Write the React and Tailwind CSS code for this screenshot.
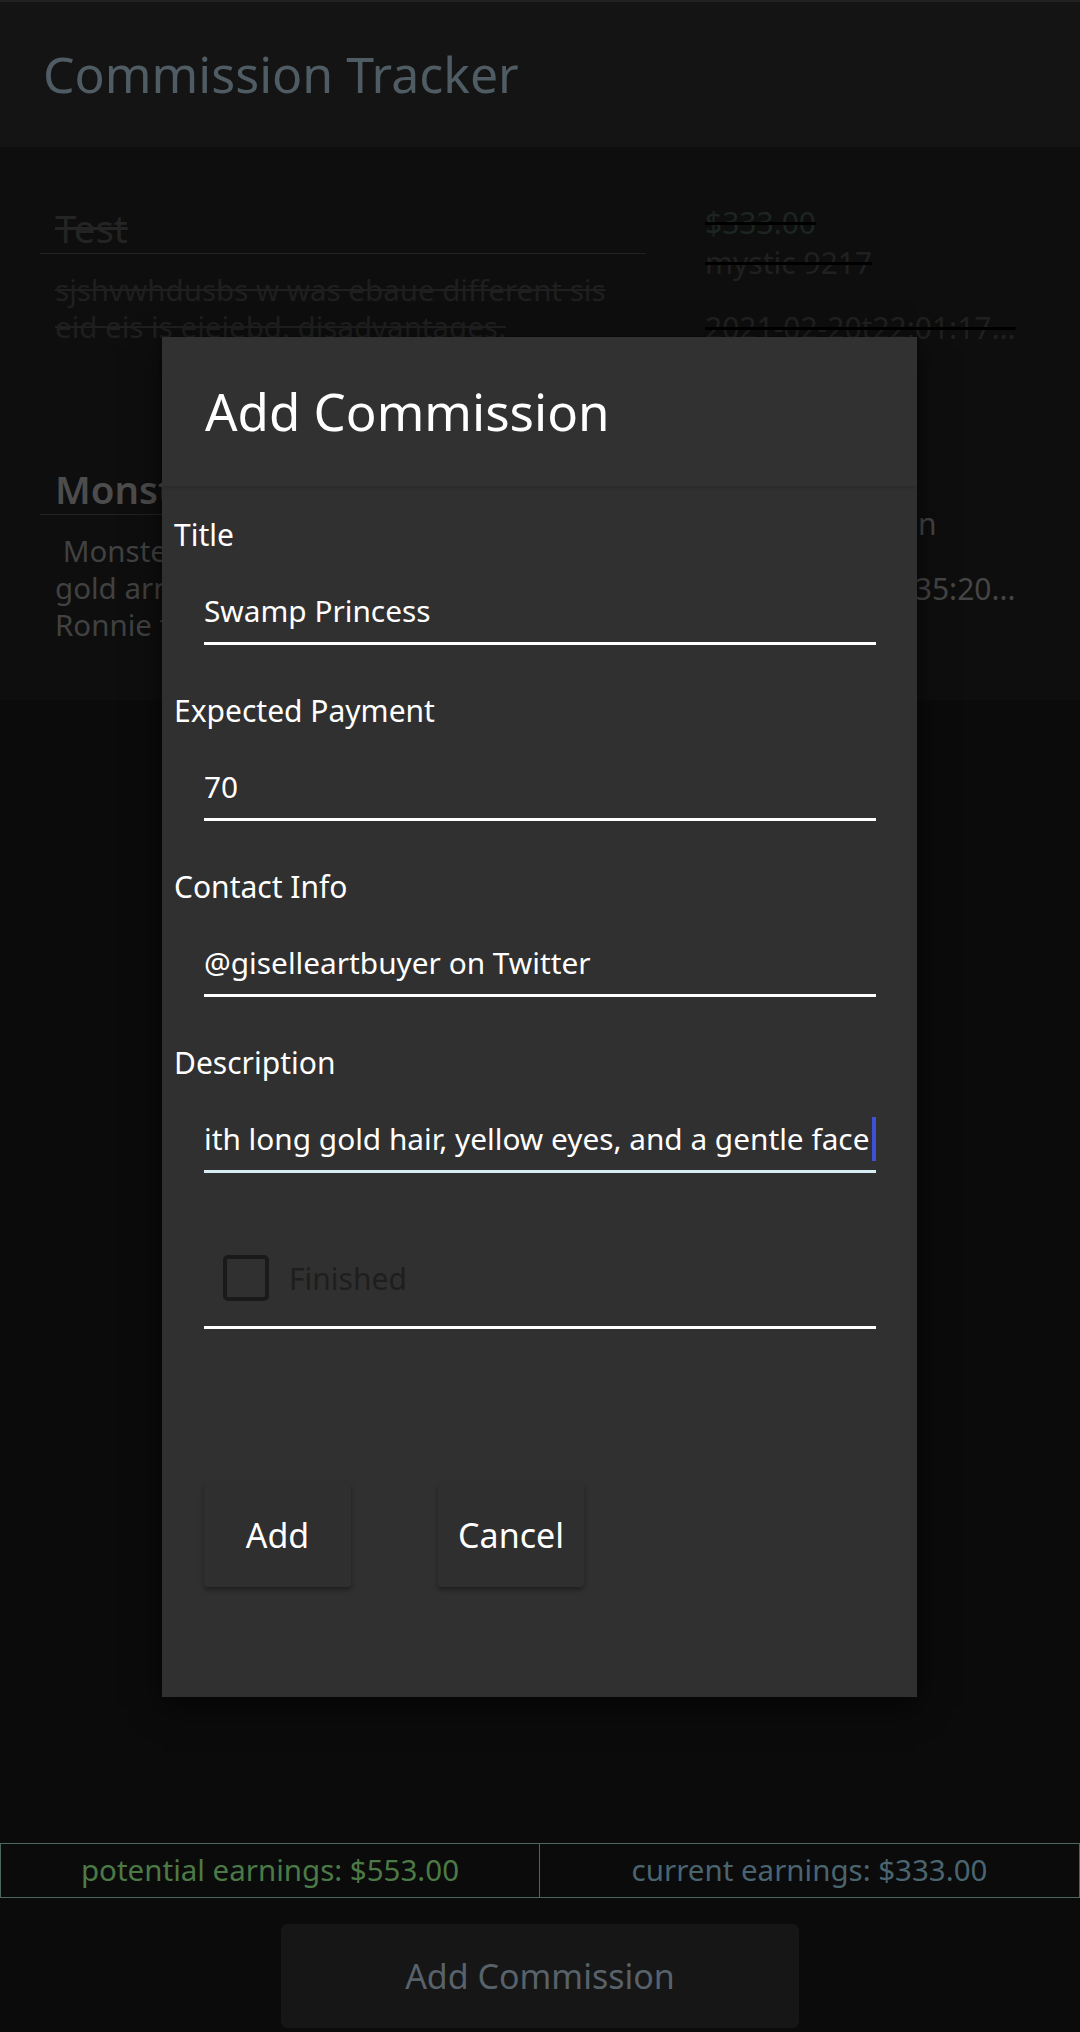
import React from "react"

function Card({title, desc, price, contact, date, done}) {
  const strike = done ? "line-through" : ""
  return (
    <div className="h-[261px] grid grid-cols-[606px_1fr] gap-[59px] pl-[40px]">
      <div className="pt-[35px]">
        <div className={`h-[49px] border-b border-[#222] pl-[15px] flex items-center text-[38.5px] ${done ? "text-[#242424]" : "text-[#4c4c4c] font-semibold"} ${strike}`}>
          {title}
        </div>
        <div className={`mt-[17px] pl-[15px] pr-[30px] text-[29.5px] leading-[37px] whitespace-pre-wrap ${done ? "text-[#1f1f1f]" : "text-[#414141]"} ${strike}`}>
          {desc}
        </div>
      </div>
      <div className={`pt-[33px] text-[30px] leading-[40px] ${strike}`}>
        <div className={done ? "text-[#1c2520]" : "text-[#3d4a42]"}>{price}</div>
        <div className={done ? "text-[#202020]" : "text-[#454545]"}>{contact}</div>
        <div className={`mt-[25px] whitespace-nowrap ${done ? "text-[#202020]" : "text-[#454545]"}`}>{date}</div>
      </div>
    </div>
  )
}

function Field({label, value, focused, last}) {
  return (
    <div className={last ? "" : "mb-[46px]"}>
      <div className="pl-[12px] h-10 leading-10 text-[30px] text-white">{label}</div>
      <div className={`mt-[25px] ml-[42px] mr-[41px] h-[65px] border-b-[3px] flex items-center text-[29.8px] text-white whitespace-nowrap overflow-hidden ${focused ? "border-[#d6eef3]" : "border-white"}`}>
        {value}
        {focused && <span className="ml-[3px] w-[5px] h-[44px] bg-[#3d51d6] shrink-0" />}
      </div>
    </div>
  )
}

export default function App() {
  return (
    <div className="relative h-[2032px] overflow-hidden bg-[#0b0b0b] font-['Noto_Sans',sans-serif] flex flex-col">
      {/* Header */}
      <header className="h-[147px] shrink-0 bg-[#141414] border-t-2 border-[#222] flex items-center pl-[43px]">
        <h1 className="text-[50px] leading-none text-[#4f5c63] -mt-[2px]">Commission Tracker</h1>
      </header>

      {/* Commission list */}
      <section className="h-[553px] shrink-0 bg-[#0e0e0e] pt-[23px]">
        <Card
          done
          title="Test"
          desc={"sjshvwhdusbs w was ebaue different sis\neid eis is eiejebd. disadvantages."}
          price="$333.00"
          contact="mystic 9217"
          date="2021-02-20t22:01:17..."
        />
        <Card
          title="Monster Hunter"
          desc={" Monster hunter paladin in\ngold armor with a great sword,\nRonnie from the campaign"}
          price="$220.00"
          contact="Ronnie Emerson"
          date="2021-02-21t14:35:20..."
        />
      </section>

      <div className="flex-1" />

      {/* Earnings */}
      <div className="h-[55px] grid grid-cols-2 border border-[#4d665a] text-[29.5px] mb-[26px]">
        <div className="flex items-center justify-center text-[#4b7a46] border-r border-[#4d665a]">potential earnings: $553.00</div>
        <div className="flex items-center justify-center text-[#4a6470]">current earnings: $333.00</div>
      </div>

      <div className="flex justify-center mb-[4px]">
        <button className="w-[518px] h-[104px] rounded-[6px] bg-[#161616] text-[34px] text-[#58626a]">Add Commission</button>
      </div>

      {/* Dialog */}
      <div className="absolute left-[162px] top-[337px] w-[755px] h-[1360px] bg-[#303030] shadow-[0_10px_30px_rgba(0,0,0,0.6)] flex flex-col">
        <div className="h-[149px] shrink-0 bg-[#313131] shadow-[0_2px_3px_rgba(0,0,0,0.12)] flex items-center pl-[43px]">
          <h2 className="text-[51px] leading-none text-white">Add Commission</h2>
        </div>
        <div className="pt-[29px]">
          <Field label="Title" value="Swamp Princess" />
          <Field label="Expected Payment" value="70" />
          <Field label="Contact Info" value="@giselleartbuyer on Twitter" />
          <Field label="Description" value="ith long gold hair, yellow eyes, and a gentle face" focused last />

          <div className="mt-[57px] ml-[42px] mr-[41px] h-[99px] border-b-[3px] border-white flex items-center pl-[19px]">
            <span className="w-[46px] h-[46px] border-4 border-[#1a1a1a] rounded-[5px]" />
            <span className="ml-[20px] text-[30px] text-[#1e1e1e]">Finished</span>
          </div>

          <div className="mt-[154px] ml-[42px] flex gap-[87px]">
            <button className="w-[147px] h-[104px] rounded-[4px] bg-[#2f2f2f] shadow-[0_3px_5px_rgba(0,0,0,0.35)] text-[34px] text-white">Add</button>
            <button className="w-[146px] h-[104px] rounded-[4px] bg-[#2f2f2f] shadow-[0_3px_5px_rgba(0,0,0,0.35)] text-[34px] text-white">Cancel</button>
          </div>
        </div>
      </div>
    </div>
  )
}
